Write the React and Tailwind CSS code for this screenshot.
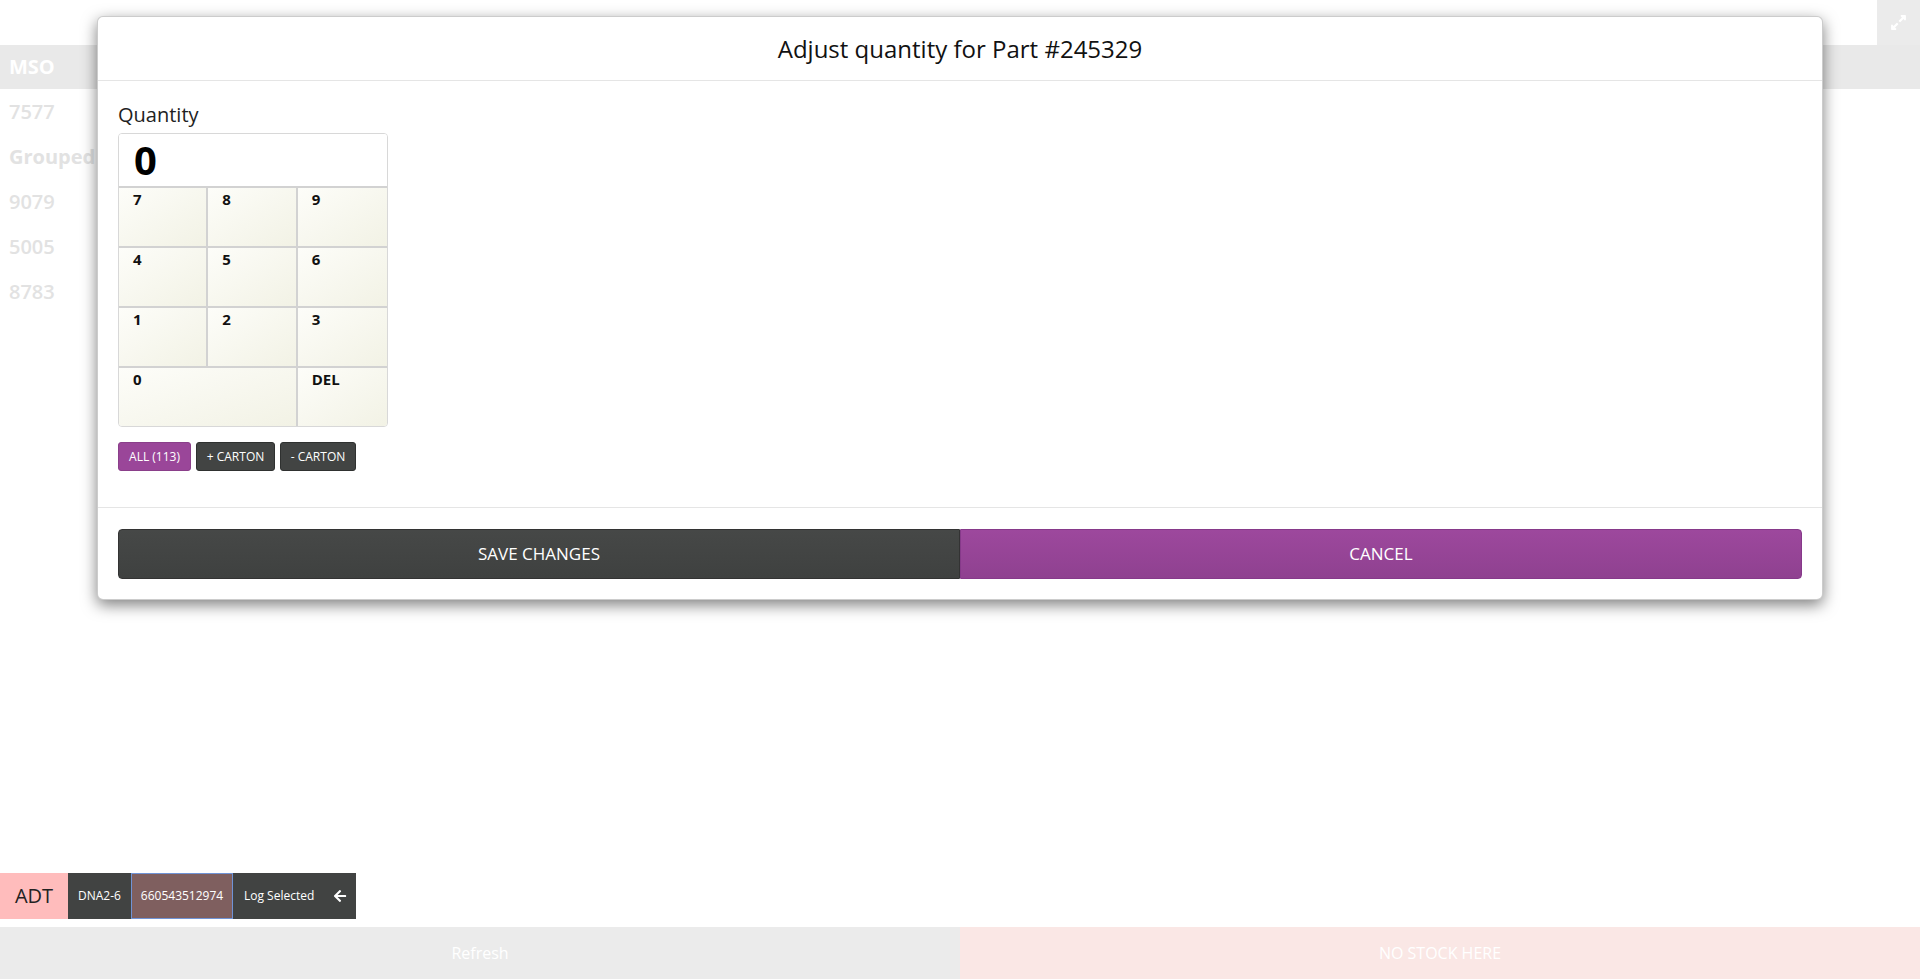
import React from "react";
import { FaExpandAlt, FaArrowLeft } from "react-icons/fa";

const rows = [
  { t: "7577", b: "font-semibold" },
  { t: "Grouped", b: "font-bold" },
  { t: "9079", b: "font-semibold" },
  { t: "5005", b: "font-semibold" },
  { t: "8783", b: "font-semibold" },
];

function Key({ label, span, last }) {
  return (
    <div
      className={
        "h-[60px] border-t-2 border-[#d2d2d2] bg-gradient-to-br from-[#fdfdf9] to-[#f2f2e5] pl-[14px] pt-[1px] text-[15px] font-bold leading-[20px] text-[#111] " +
        (span ? "col-span-2 " : "") +
        (last ? "" : "border-r-2")
      }
    >
      {label}
    </div>
  );
}

export default function App() {
  return (
    <div className="relative h-[979px] w-[1920px] overflow-hidden bg-white font-['Open_Sans',sans-serif]">
      <div className="flex h-full flex-col">
        <div className="flex h-[45px] justify-end bg-white">
          <div className="flex w-[43px] items-center justify-center bg-[#ebebeb]">
            <FaExpandAlt className="h-[17px] w-[17px] text-white" />
          </div>
        </div>
        <div className="flex h-[44px] items-center bg-[#e9e9e9] px-[9px] text-[20px] font-bold text-white">
          MSO
        </div>
        {rows.map((r) => (
          <div
            key={r.t}
            className={"flex h-[45px] items-center px-[9px] text-[20px] text-[#e2e2e2] " + r.b}
          >
            {r.t}
          </div>
        ))}
        <div className="flex-1" />
        <div className="flex h-[46px]">
          <div className="flex w-[68px] items-center justify-center bg-[#ffbcbc] text-[20px] text-[#222]">
            ADT
          </div>
          <div className="flex w-[63px] items-center justify-center bg-[#414342] text-[12px] text-white">
            DNA2-6
          </div>
          <div className="flex w-[102px] items-center justify-center border border-[#7093d6] bg-[#7f5f5f] text-[12px] text-white">
            660543512974
          </div>
          <div className="flex w-[123px] items-center bg-[#414342] pl-[11px] text-[12px] text-white">
            Log Selected
            <FaArrowLeft className="ml-[19px] h-[14px] w-[14px] text-white" />
          </div>
        </div>
        <div className="mt-[8px] flex h-[52px]">
          <div className="flex flex-1 items-center justify-center bg-[#ebebeb] text-[16px] text-white">
            Refresh
          </div>
          <div className="flex flex-1 items-center justify-center bg-[#fae7e5] text-[16px] text-white">
            NO STOCK HERE
          </div>
        </div>
      </div>

      <div className="absolute left-[97px] top-[16px] w-[1726px] rounded-[6px] border border-black/20 bg-white shadow-[0_5px_15px_rgba(0,0,0,0.5)]">
        <div className="flex h-[64px] items-center justify-center border-b border-[#e5e5e5] text-[24px] text-[#111]">
          Adjust quantity for Part #245329
        </div>
        <div className="px-[20px] pb-[36px] pt-[22px]">
          <div className="text-[20px] leading-[24px] text-[#222]">Quantity</div>
          <div className="mt-[6px] w-[270px] overflow-hidden rounded-[4px] border border-[#d8d8d8]">
            <div className="flex h-[52px] items-center bg-white pl-[15px] text-[40px] font-bold leading-none text-black">
              0
            </div>
            <div className="grid grid-cols-3">
              <Key label="7" />
              <Key label="8" />
              <Key label="9" last />
              <Key label="4" />
              <Key label="5" />
              <Key label="6" last />
              <Key label="1" />
              <Key label="2" />
              <Key label="3" last />
              <Key label="0" span />
              <Key label="DEL" last />
            </div>
          </div>
          <div className="mt-[15px] flex gap-[5px]">
            <button className="h-[29px] w-[73px] rounded-[3px] border border-[#8a3f8a] bg-[#9a4699] text-[12px] text-white">
              ALL (113)
            </button>
            <button className="h-[29px] w-[79px] rounded-[3px] border border-[#2f3130] bg-[#424443] text-[12px] text-white">
              + CARTON
            </button>
            <button className="h-[29px] w-[76px] rounded-[3px] border border-[#2f3130] bg-[#424443] text-[12px] text-white">
              - CARTON
            </button>
          </div>
        </div>
        <div className="flex border-t border-[#e5e5e5] px-[20px] pb-[20px] pt-[21px]">
          <button className="flex h-[50px] flex-1 items-center justify-center rounded-l-[4px] border border-[#333] bg-gradient-to-b from-[#464847] to-[#3f4140] text-[17px] text-white">
            SAVE CHANGES
          </button>
          <button className="flex h-[50px] flex-1 items-center justify-center rounded-r-[4px] border border-[#86398a] bg-gradient-to-b from-[#9d489d] to-[#8f4190] text-[17px] text-white">
            CANCEL
          </button>
        </div>
      </div>
    </div>
  );
}
